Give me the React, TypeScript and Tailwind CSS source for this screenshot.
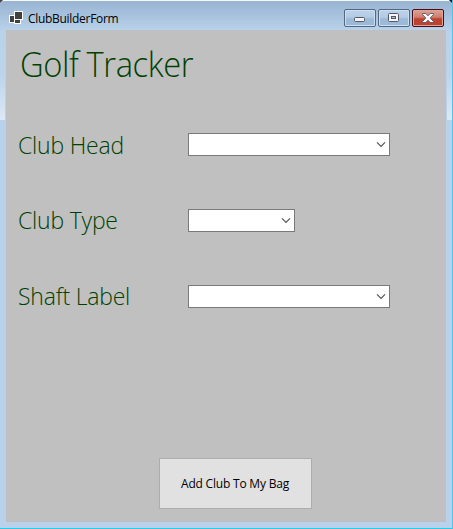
import type { ReactNode } from "react";

function Combo({ width }: { width: string }) {
  return (
    <div className={`flex h-[23px] items-center justify-end border border-[#7a7a7a] bg-white pr-[3px] ${width}`}>
      <svg width="10" height="7" viewBox="0 0 10 7" fill="none" stroke="#555" strokeWidth="1.2">
        <path d="M1 1.3 L5 5.3 L9 1.3" />
      </svg>
    </div>
  );
}

function Field({ label, width, lift }: { label: string; width: string; lift: string }) {
  return (
    <div className="flex h-[76px] items-start">
      <div className={`w-[170px] shrink-0 ${lift}`}>
        <div className="w-[170px] origin-left scale-x-[0.957] text-[24px] leading-[30px] font-light tracking-[-0.2px] whitespace-nowrap text-[#004000]">{label}</div>
      </div>
      <Combo width={width} />
    </div>
  );
}

function CaptionButton({ children, close = false }: { children: ReactNode; close?: boolean }) {
  const look = close
    ? "border-[#480c17] from-[#dda293] from-0% via-[#cf7f6e] via-45% to-[#bd4230] to-55% shadow-[inset_0_0_0_1px_#dfa397]"
    : "border-[#54677f] from-[#bdd2e9] from-0% via-[#b4cbe4] via-45% to-[#9db9d8] to-55% shadow-[inset_0_0_0_1px_#cbdff3]";
  return (
    <div className={`flex h-[18px] w-8 items-center justify-center rounded-[2px] border bg-linear-to-b ${look}`}>{children}</div>
  );
}

export default function App() {
  return (
    <div className="relative flex h-[529px] w-[453px] flex-col overflow-hidden border-r border-b border-r-[#49c6ed] border-b-[#20cfea] bg-[#b9d1ea] font-['Open_Sans','Noto_Sans',sans-serif]">
      <div className="flex h-[30px] shrink-0 items-start rounded-t-[4px] border-t border-t-[#f5f9fd] bg-linear-to-b from-[#98b4d2] to-[#b9d1ea] pl-[9px]">
        <svg className="mt-[10px]" width="14" height="13" viewBox="0 0 14 13">
          <path fill="#fff" d="M5 0h9v9h-2v4H5v-1H0V4h5z" />
          <path fill="#404040" d="M6 1h7v7H6zM1 5h4v6H1zM6 9h5v3H6z" />
        </svg>
        <div className="mt-[9px] ml-[5px] w-[316px] text-[12px] leading-[17px] tracking-[-0.3px] whitespace-nowrap text-black">ClubBuilderForm</div>
        <div className="mt-2 flex gap-[2px]">
          <CaptionButton>
            <svg className="mt-[3px]" width="12" height="6" viewBox="0 0 12 6">
              <rect x=".5" y=".5" width="10" height="4" rx="1" fill="#f5f5f5" stroke="#535666" />
            </svg>
          </CaptionButton>
          <CaptionButton>
            <svg width="12" height="10" viewBox="0 0 12 10">
              <rect x=".5" y=".5" width="10" height="8" rx="1" fill="#f5f5f5" stroke="#535666" />
              <rect x="3.5" y="3.5" width="4" height="2" fill="#a9bfd7" stroke="#535666" />
            </svg>
          </CaptionButton>
          <CaptionButton close>
            <svg width="12" height="10" viewBox="0 0 12 10">
              <path d="M.5.5h3.3L6 2.8 8.2.5h3.3v1L8.2 5l3.3 3.5v1H8.2L6 7.2 3.8 9.5H.5v-1L3.8 5 .5 1.5z" fill="#f7f7f7" stroke="#535666" strokeWidth=".9" />
            </svg>
          </CaptionButton>
        </div>
      </div>
      <div className="flex h-[492px] shrink-0">
        <div className="flex w-[6px] flex-col">
          <div className="h-[90px] w-[5px] bg-linear-to-b from-[#b9d1ea] via-[#bdd4ec] via-50% to-[#dce8f5]" />
        </div>
        <div className="flex w-[440px] flex-col bg-[#c0c0c0]">
          <h1 className="mt-[9px] ml-[14px] h-[50px] w-[200px] origin-left scale-x-[0.935] text-[35px] leading-[50px] font-light tracking-[-0.43px] whitespace-nowrap text-[#004000]">Golf Tracker</h1>
          <div className="mt-11 ml-3">
            <Field label="Club Head" width="w-[202px]" lift="-mt-[3px]" />
            <Field label="Club Type" width="w-[107px]" lift="-mt-1" />
            <Field label="Shaft Label" width="w-[202px]" lift="-mt-1" />
          </div>
          <button className="mt-auto mb-[13px] ml-[153px] h-[51px] w-[153px] border border-[#adadad] bg-[#e1e1e1] pr-px text-[12px] tracking-[-0.2px] whitespace-nowrap text-black">Add Club To My Bag</button>
        </div>
        <div className="flex w-[6px] flex-col items-end">
          <div className="h-[90px] w-[5px] bg-linear-to-b from-[#b9d1ea] via-[#bdd4ec] via-50% to-[#dce8f5]" />
        </div>
      </div>
      <div className="absolute top-[262px] -right-px h-[5px] w-px bg-black" />
      <div className="absolute -bottom-px left-[224px] h-px w-[5px] bg-black" />
      <svg className="absolute top-0 left-0" width="3" height="3">
        <path d="M0 0h3L0 3z" fill="#444" />
      </svg>
      <svg className="absolute top-0 -right-px" width="4" height="4">
        <path d="M0 0h4v4z" fill="#111" />
      </svg>
    </div>
  );
}
